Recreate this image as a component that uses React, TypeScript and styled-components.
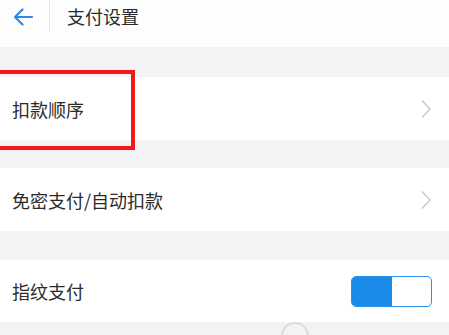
import styled, { createGlobalStyle } from 'styled-components';

const GlobalStyle = createGlobalStyle`
  html, body {
    margin: 0;
    padding: 0;
    background: #f3f3f6;
  }
  body {
    font-family: 'Noto Sans CJK SC', 'Noto Sans', sans-serif;
    color: #333;
  }
`;

const Page = styled.div`
  width: 449px;
  height: 335px;
  overflow: hidden;
  display: flex;
  flex-direction: column;
  background: #f3f3f6;
`;

const Header = styled.div`
  height: 47px;
  background: #fdfdfd;
  display: flex;
  align-items: flex-start;
`;

const BackButton = styled.div`
  width: 50px;
  height: 32px;
  display: flex;
  align-items: center;
  padding: 1px 0 0 13px;
  box-sizing: border-box;
  border-right: 1px solid #e6e6e8;
`;

const Title = styled.div`
  margin-left: 17px;
  height: 32px;
  line-height: 32px;
  font-size: 18px;
  color: #2b2b2b;
`;

const Gap = styled.div<{ $h: number }>`
  height: ${(p) => p.$h}px;
  flex-shrink: 0;
`;

const Row = styled.div<{ $h: number }>`
  position: relative;
  height: ${(p) => p.$h}px;
  background: #fff;
  display: flex;
  align-items: center;
  justify-content: space-between;
  padding: 0 17px 0 12px;
  flex-shrink: 0;
`;

const Label = styled.span`
  font-size: 18px;
  color: #2b2b2b;
`;

const Highlight = styled.div`
  position: absolute;
  left: -4px;
  top: -7px;
  width: 139px;
  height: 80px;
  border: 4px solid #f41818;
  box-sizing: border-box;
`;

const Toggle = styled.div`
  width: 81px;
  height: 31px;
  border: 1.5px solid #2a90ea;
  border-radius: 5px;
  box-sizing: border-box;
  display: flex;
  overflow: hidden;
`;

const ToggleOn = styled.div`
  width: 40px;
  background: #1a8be8;
`;

const Footer = styled.div`
  position: relative;
  flex: 1;
`;

const Watermark = styled.div`
  position: absolute;
  left: 281px;
  top: 0;
  width: 24px;
  height: 24px;
  border: 2px solid #dcdce0;
  border-radius: 50%;
`;

const Chevron = () => (
  <svg width="12" height="20" viewBox="0 0 12 20">
    <path d="M2 1.5 L10 10 L2 18.5" fill="none" stroke="#c7c7cc" strokeWidth="1.4" />
  </svg>
);

const App = () => {
  return (
    <Page>
      <GlobalStyle />
      <Header>
        <BackButton>
          <svg width="20" height="18" viewBox="0 0 20 18">
            <path
              d="M19 9 H2 M9.5 1.5 L2 9 L9.5 16.5"
              fill="none"
              stroke="#2f8ae6"
              strokeWidth="2.2"
              strokeLinecap="round"
              strokeLinejoin="round"
            />
          </svg>
        </BackButton>
        <Title>支付设置</Title>
      </Header>
      <Gap $h={30} />
      <Row $h={63}>
        <Label>扣款顺序</Label>
        <Chevron />
        <Highlight />
      </Row>
      <Gap $h={28} />
      <Row $h={63}>
        <Label>免密支付/自动扣款</Label>
        <Chevron />
      </Row>
      <Gap $h={29} />
      <Row $h={62}>
        <Label>指纹支付</Label>
        <Toggle>
          <ToggleOn />
        </Toggle>
      </Row>
      <Footer>
        <Watermark />
      </Footer>
    </Page>
  );
};

export default App;
